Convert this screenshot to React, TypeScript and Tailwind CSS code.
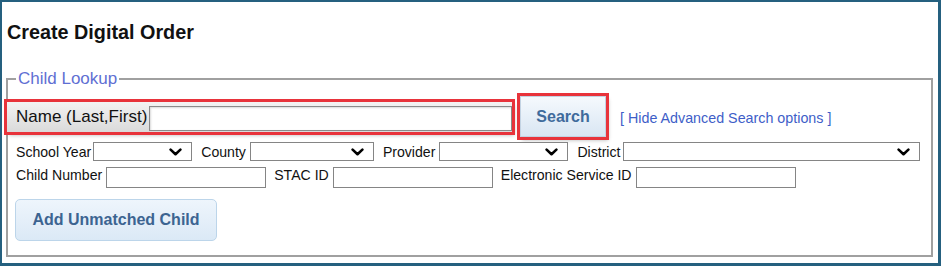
const Chevron = () => (
  <svg width="13" height="8" viewBox="0 0 13 8" fill="none">
    <path d="M1.6 1.6 L6.5 6.2 L11.4 1.6" stroke="#000" strokeWidth="2.6" strokeLinecap="round" strokeLinejoin="round" />
  </svg>
);

const FakeSelect = ({ className }: { className: string }) => (
  <div className={`shrink-0 h-[19px] border border-[#858585] bg-white flex items-center justify-end pr-[9px] ${className}`}>
    <Chevron />
  </div>
);

const TextBox = ({ className }: { className: string }) => (
  <input type="text" className={`shrink-0 h-[21px] border border-[#858585] bg-white outline-none ${className}`} />
);

export default function App() {
  return (
    <div className="w-[941px] h-[266px] bg-white border-t-2 border-l-2 border-r-[3px] border-b-[3px] border-[#25607f] px-[4px] pt-[19px] font-['Liberation_Sans',Arial,sans-serif] text-[#111]">
      <h2 className="ml-[1px] text-[19.8px] leading-[22px] font-bold">Create Digital Order</h2>

      <fieldset className="mt-[26px] mr-[1px] border-2 border-[#a0a0a0] px-[8px] pb-[14px]">
        <legend className="px-[2px] text-[17px] leading-[19px] text-[#5f6fd3]">Child Lookup</legend>

        <div className="flex items-center pt-[8px]">
          <div className="-ml-[9px] pl-[9px] w-[505px] h-[30px] flex items-center bg-gradient-to-b from-[#f3f3f3] to-[#dadada] shadow-[0_0_0_3px_#e8333b,2px_3px_4px_rgba(0,0,0,0.3)]">
            <span className="text-[17px] leading-[19px] whitespace-nowrap">Name (Last,First)</span>
            <input type="text" className="ml-[2px] flex-1 min-w-0 h-[25px] mt-[3px] border border-[#8a8a8a] bg-white outline-none shadow-[inset_1px_1px_2px_rgba(0,0,0,0.15)]" />
          </div>
          <button className="ml-[8px] w-[86px] h-[41px] bg-gradient-to-b from-[#f5f9fd] to-[#d9e6f3] border border-[#c3d3e3] text-[16px] font-bold text-[#3f6b9c] shadow-[0_0_0_3px_#e8333b,2px_3px_4px_rgba(0,0,0,0.3)]">
            Search
          </button>
          <a className="ml-[14px] mt-[2px] text-[14.3px] leading-[16px] text-[#3e5ec8] whitespace-nowrap">[ Hide Advanced Search options ]</a>
        </div>

        <div className="flex items-center mt-[5px] text-[14.1px] leading-[16px] whitespace-nowrap">
          <span>School Year</span>
          <FakeSelect className="ml-[2px] w-[99px]" />
          <span className="ml-[9px]">County</span>
          <FakeSelect className="ml-[4px] w-[124px]" />
          <span className="ml-[9px]">Provider</span>
          <FakeSelect className="ml-[4px] w-[129px]" />
          <span className="ml-[9px]">District</span>
          <FakeSelect className="ml-[3px] w-[297px]" />
        </div>

        <div className="flex items-start mt-[6px] text-[14.1px] leading-[16px] whitespace-nowrap">
          <span>Child Number</span>
          <TextBox className="ml-[4px] w-[160px]" />
          <span className="ml-[8px]">STAC ID</span>
          <TextBox className="ml-[4px] w-[160px]" />
          <span className="ml-[8px]">Electronic Service ID</span>
          <TextBox className="ml-[4px] w-[160px]" />
        </div>

        <button className="mt-[11px] -ml-[1px] w-[202px] h-[42px] rounded-[5px] border border-[#bcd5ea] bg-gradient-to-b from-[#eef5fc] to-[#dbe9f6] text-[16px] font-bold text-[#3c6491]">
          Add Unmatched Child
        </button>
      </fieldset>
    </div>
  );
}
